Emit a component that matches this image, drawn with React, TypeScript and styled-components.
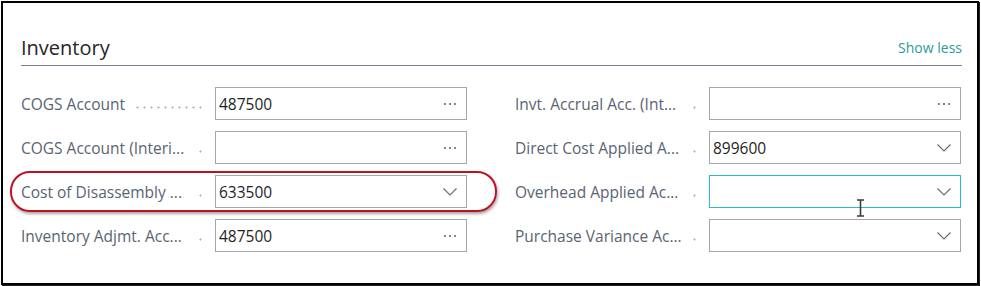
import React from 'react';
import styled, { createGlobalStyle } from 'styled-components';

type Field = {
  label: string;
  value?: string;
  kind: 'lookup' | 'dropdown';
  focused?: boolean;
};

const left: Field[] = [
  { label: 'COGS Account', value: '487500', kind: 'lookup' },
  { label: 'COGS Account (Interi...', kind: 'lookup' },
  { label: 'Cost of Disassembly ...', value: '633500', kind: 'dropdown' },
  { label: 'Inventory Adjmt. Acc...', value: '487500', kind: 'lookup' },
];

const right: Field[] = [
  { label: 'Invt. Accrual Acc. (Int...', kind: 'lookup' },
  { label: 'Direct Cost Applied A...', value: '899600', kind: 'dropdown' },
  { label: 'Overhead Applied Ac...', kind: 'dropdown', focused: true },
  { label: 'Purchase Variance Ac...', kind: 'dropdown' },
];

const GlobalStyle = createGlobalStyle`
  body {
    margin: 0;
    background: #fff;
    font-family: 'Open Sans', 'Noto Sans', sans-serif;
  }
`;

const Frame = styled.div`
  position: relative;
  box-sizing: border-box;
  margin: 1px;
  width: 978px;
  height: 284px;
  border: 2px solid #000;
  box-shadow: 1px 1px 0 #222;
  padding: 0 15px 0 18px;
  background: #fff;
`;

const Header = styled.div`
  box-sizing: border-box;
  height: 63px;
  display: flex;
  align-items: flex-end;
  justify-content: space-between;
  padding-bottom: 4px;
  border-bottom: 1px solid #7b8090;
`;

const Title = styled.h2`
  margin: 0;
  font-size: 20px;
  font-weight: 400;
  line-height: 26px;
  color: #262626;
`;

const ShowLess = styled.a`
  font-size: 14px;
  line-height: 22px;
  color: #2b9a9c;
  text-decoration: none;
  margin-bottom: 2px;
`;

const Grid = styled.div`
  margin-top: 21px;
  display: grid;
  grid-template-columns: 446px 446px;
  column-gap: 48px;
`;

const Column = styled.div`
  display: flex;
  flex-direction: column;
  gap: 11px;
`;

const Row = styled.div`
  display: grid;
  grid-template-columns: 194px 252px;
  height: 33px;
`;

const LabelCell = styled.div`
  display: flex;
  align-items: center;
  padding-right: 11px;
  min-width: 0;
`;

const LabelText = styled.span`
  font-size: 15.5px;
  color: #5a6472;
  white-space: nowrap;
  overflow: hidden;
  text-overflow: ellipsis;
  max-width: 167px;
`;

const Leader = styled.span`
  flex: 1;
  min-width: 7px;
  margin-left: 9px;
  height: 3px;
  margin-top: 8px;
  background-image: radial-gradient(circle, #b9bcc2 0.9px, transparent 1.3px);
  background-size: 7px 3px;
  background-repeat: space no-repeat;
  background-position: right center;
`;

const Input = styled.div<{ $focused?: boolean }>`
  box-sizing: border-box;
  display: flex;
  align-items: center;
  height: 33px;
  padding: 0 9px 0 3px;
  border: 1px solid ${({ $focused }) => ($focused ? '#27bcc6' : '#a3a7ae')};
  font-size: 15.5px;
  color: #1f1f1f;
`;

const Value = styled.span`
  flex: 1;
`;

const Annotation = styled.div`
  position: absolute;
  left: 7px;
  top: 168px;
  width: 487px;
  height: 41px;
  box-sizing: border-box;
  border: 2.5px solid #bf1220;
  border-radius: 20px;
  box-shadow: 1px 2px 3px rgba(0, 0, 0, 0.35);
  pointer-events: none;
`;

const Cursor = styled.svg`
  position: absolute;
  left: 853px;
  top: 196px;
`;

const MoreIcon = () => (
  <svg width="14" height="4" viewBox="0 0 14 4">
    <circle cx="2" cy="2" r="1" fill="#5f5f5f" />
    <circle cx="7" cy="2" r="1" fill="#5f5f5f" />
    <circle cx="12" cy="2" r="1" fill="#5f5f5f" />
  </svg>
);

const Chevron = () => (
  <svg width="14" height="8" viewBox="0 0 14 8">
    <path d="M0.5 0.5 L7 7 L13.5 0.5" fill="none" stroke="#6b6b6b" strokeWidth="1.1" />
  </svg>
);

function FieldRow({ f }: { f: Field }) {
  return (
    <Row>
      <LabelCell>
        <LabelText>{f.label}</LabelText>
        <Leader />
      </LabelCell>
      <Input $focused={f.focused}>
        <Value>{f.value}</Value>
        {f.kind === 'lookup' ? <MoreIcon /> : <Chevron />}
      </Input>
    </Row>
  );
}

export default function App() {
  return (
    <>
      <GlobalStyle />
      <Frame>
        <Header>
          <Title>Inventory</Title>
          <ShowLess href="#">Show less</ShowLess>
        </Header>
        <Grid>
          <Column>
            {left.map((f) => (
              <FieldRow key={f.label} f={f} />
            ))}
          </Column>
          <Column>
            {right.map((f) => (
              <FieldRow key={f.label} f={f} />
            ))}
          </Column>
        </Grid>
        <Annotation />
        <Cursor width="9" height="18" viewBox="0 0 9 18">
          <path d="M1 1 H8 M4.5 1 V17 M1 17 H8" stroke="#3a3a3a" strokeWidth="1.6" fill="none" />
        </Cursor>
      </Frame>
    </>
  );
}
